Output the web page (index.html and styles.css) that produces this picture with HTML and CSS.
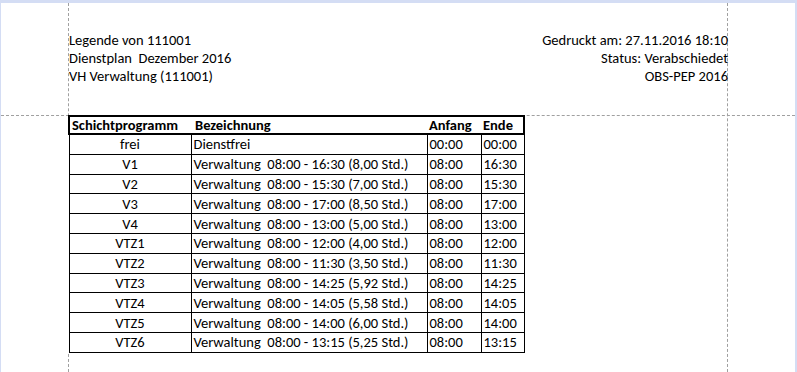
FILE: index.html
```html
<!DOCTYPE html>
<html lang="de">
<head>
<meta charset="utf-8">
<title>Legende von 111001</title>
<link rel="stylesheet" href="styles.css">
</head>
<body>
<div class="frame">
  <div class="page">
    <div class="guide guide-v guide-left"></div>
    <div class="guide guide-v guide-right"></div>
    <div class="guide guide-h"></div>
    <header class="head">
      <div class="head-left">
        <div>Legende von 111001</div>
        <div class="pre">Dienstplan  Dezember 2016</div>
        <div>VH Verwaltung (111001)</div>
      </div>
      <div class="head-right">
        <div>Gedruckt am: 27.11.2016 18:10</div>
        <div>Status: Verabschiedet</div>
        <div>OBS-PEP 2016</div>
      </div>
    </header>
    <table class="legend">
      <colgroup>
        <col class="c1"><col class="c2"><col class="c3"><col class="c4">
      </colgroup>
      <thead>
        <tr class="hrow">
          <th class="left">Schichtprogramm</th>
          <th class="bez">Bezeichnung</th>
          <th>Anfang</th>
          <th>Ende</th>
        </tr>
      </thead>
      <tbody>
        <tr><td class="ctr">frei</td><td>Dienstfrei</td><td>00:00</td><td>00:00</td></tr>
        <tr><td class="ctr">V1</td><td>Verwaltung  08:00 - 16:30 (8,00 Std.)</td><td>08:00</td><td>16:30</td></tr>
        <tr><td class="ctr">V2</td><td>Verwaltung  08:00 - 15:30 (7,00 Std.)</td><td>08:00</td><td>15:30</td></tr>
        <tr><td class="ctr">V3</td><td>Verwaltung  08:00 - 17:00 (8,50 Std.)</td><td>08:00</td><td>17:00</td></tr>
        <tr><td class="ctr">V4</td><td>Verwaltung  08:00 - 13:00 (5,00 Std.)</td><td>08:00</td><td>13:00</td></tr>
        <tr><td class="ctr">VTZ1</td><td>Verwaltung  08:00 - 12:00 (4,00 Std.)</td><td>08:00</td><td>12:00</td></tr>
        <tr><td class="ctr">VTZ2</td><td>Verwaltung  08:00 - 11:30 (3,50 Std.)</td><td>08:00</td><td>11:30</td></tr>
        <tr><td class="ctr">VTZ3</td><td>Verwaltung  08:00 - 14:25 (5,92 Std.)</td><td>08:00</td><td>14:25</td></tr>
        <tr><td class="ctr">VTZ4</td><td>Verwaltung  08:00 - 14:05 (5,58 Std.)</td><td>08:00</td><td>14:05</td></tr>
        <tr><td class="ctr">VTZ5</td><td>Verwaltung  08:00 - 14:00 (6,00 Std.)</td><td>08:00</td><td>14:00</td></tr>
        <tr><td class="ctr">VTZ6</td><td>Verwaltung  08:00 - 13:15 (5,25 Std.)</td><td>08:00</td><td>13:15</td></tr>
      </tbody>
    </table>
  </div>
</div>
</body>
</html>
```
FILE: styles.css
```css
html, body {
  margin: 0;
  padding: 0;
  background: #d4ddf4;
}
body {
  font-family: Calibri, Carlito, Lato, "Open Sans", sans-serif;
  font-size: 14.5px;
  color: #000;
  width: 797px;
  height: 372px;
  overflow: hidden;
}
.frame {
  padding: 3px 2px 0 1px;
  height: 369px;
}
.page {
  position: relative;
  background: #fff;
  height: 369px;
  padding-left: 67px;
  box-sizing: border-box;
}
.guide {
  position: absolute;
}
.guide-v {
  top: 0;
  bottom: 0;
  width: 0;
  border-left: 1px dashed #a0a0a0;
}
.guide-left { left: 67px; }
.guide-right { left: 726px; }
.guide-h {
  left: 0;
  right: 0;
  top: 112px;
  height: 0;
  border-top: 1px dashed #a0a0a0;
}
.head {
  position: relative;
  display: flex;
  justify-content: space-between;
  width: 660px;
  padding-top: 28px;
  line-height: 18px;
  height: 112px;
  box-sizing: border-box;
}
.head-left { padding-left: 1px; }
.head-right { text-align: right; }
.pre { white-space: pre; }
.legend {
  position: relative;
  border-collapse: collapse;
  table-layout: fixed;
  width: 455px;
  background: #fff;
  margin-top: 0;
}
.c1 { width: 122px; }
.c2 { width: 236px; }
.c3 { width: 54px; }
.c4 { width: 43px; }
.legend th, .legend td {
  padding: 0 2px;
  height: 18.8px;
  line-height: 18px;
  text-align: left;
  white-space: pre;
  overflow: hidden;
}
.legend th {
  font-weight: bold;
  height: 14px;
  line-height: 16px;
}
.hrow {
  border: 2px solid #000;
}
.hrow .bez { padding-left: 4px; }
.legend td {
  border: 1px solid #000;
}
.legend td.ctr { text-align: center; }
```
